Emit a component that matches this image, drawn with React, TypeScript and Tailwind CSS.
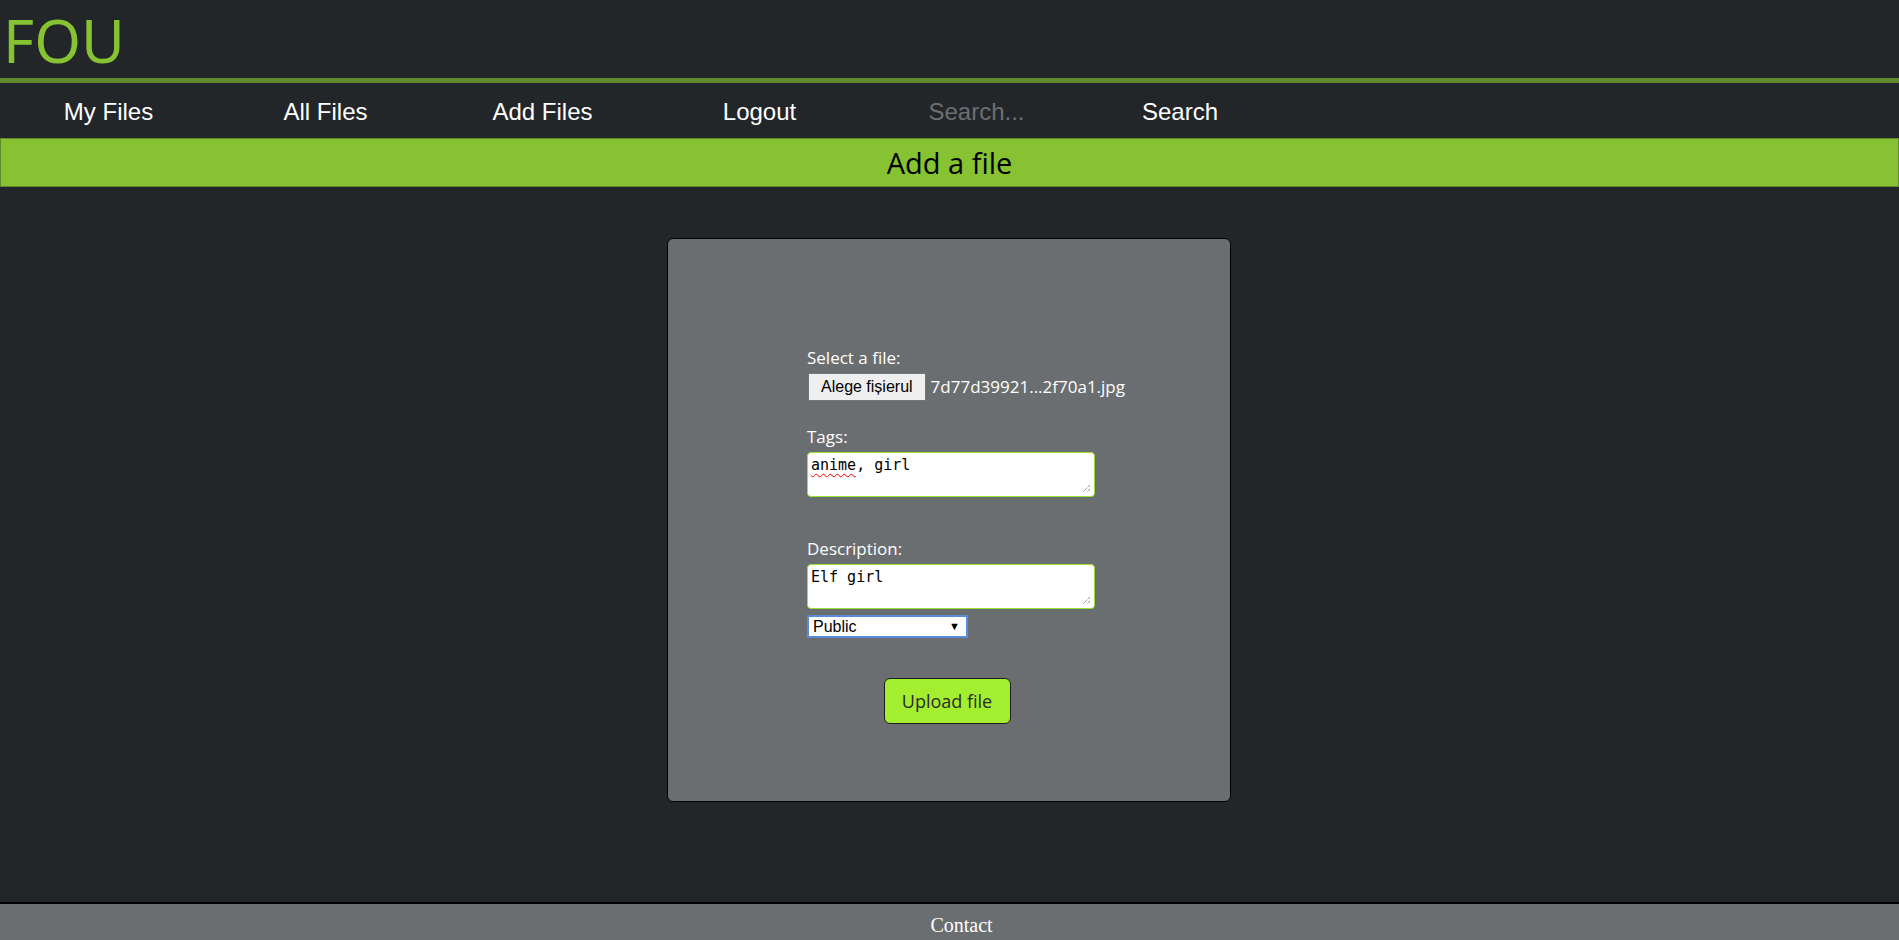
import React from "react";

const navItems = ["My Files", "All Files", "Add Files", "Logout"];

const Grip = () => (
  <svg className="absolute right-[3px] bottom-[3px]" width="10" height="10" viewBox="0 0 10 10">
    <line x1="9" y1="2" x2="2" y2="9" stroke="#555" strokeWidth="1" strokeDasharray="1 1" />
    <line x1="9" y1="6" x2="6" y2="9" stroke="#555" strokeWidth="1" strokeDasharray="1 1" />
  </svg>
);

const FakeTextarea = ({ children }: { children: React.ReactNode }) => (
  <div className="relative w-[288px] h-[45px] bg-white border border-[#9ae22e] rounded-[4px] px-[3px] pt-[3px] text-[15px] leading-[18px] text-black font-['DejaVu_Sans_Mono',monospace]">
    {children}
    <Grip />
  </div>
);

export default function App() {
  return (
    <div className="h-[940px] overflow-hidden flex flex-col bg-[#222629] font-['Open_Sans',sans-serif]">
      {/* Header */}
      <header className="h-[83px] border-b-[5px] border-[#61892f] shrink-0">
        <div className="pl-[3px] pt-[4px] text-[60px] leading-[72px] text-[#86c232] font-['Comic_Sans_MS','Noto_Sans',sans-serif]">
          FOU
        </div>
      </header>

      {/* Nav */}
      <nav className="h-[55px] flex shrink-0 font-['Liberation_Sans',Arial,sans-serif] text-[24px] leading-[55px] text-white">
        {navItems.map((item) => (
          <a key={item} className="w-[217px] text-center pt-[1px] cursor-pointer">
            {item}
          </a>
        ))}
        <input
          placeholder="Search..."
          className="w-[217px] bg-transparent text-center text-white placeholder:text-[#6c6f72] outline-none pt-[1px]"
        />
        <button className="w-[190px] text-center pt-[1px]">Search</button>
      </nav>

      {/* Page title */}
      <div className="h-[49px] shrink-0 bg-[#86c232] border border-[#61892f] text-center text-[29px] font-medium leading-[47px] text-black">
        Add a file
      </div>

      {/* Form card */}
      <main className="flex-1">
        <div className="mt-[51px] ml-[667px] w-[564px] h-[564px] bg-[#6b6e70] border border-black rounded-[6px]">
          <div className="ml-[139px] pt-[107px] text-[17px] leading-[24px] text-white">
            <div>Select a file:</div>
            <div className="mt-[3px] flex items-center whitespace-nowrap">
              <span className="ml-[1px] h-[28px] px-[12px] bg-[#efefef] border border-[#767676] text-black font-['Liberation_Sans',Arial,sans-serif] text-[16px] leading-[26px]">
                Alege fișierul
              </span>
              <span className="ml-[5px]">7d77d39921...2f70a1.jpg</span>
            </div>

            <div className="mt-[24px]">Tags:</div>
            <div className="mt-[3px]">
              <FakeTextarea>
                <span className="underline decoration-wavy decoration-[#e00] decoration-[1px] underline-offset-[3px]">anime</span>, girl
              </FakeTextarea>
            </div>

            <div className="mt-[40px]">Description:</div>
            <div className="mt-[3px]">
              <FakeTextarea>Elf girl</FakeTextarea>
            </div>

            <div className="mt-[6px] w-[161px] h-[23px] bg-white border-2 border-[#5b8bd6] flex items-center justify-between pl-[4px] pr-[6px] text-black font-['Liberation_Sans',Arial,sans-serif] text-[16px] leading-[19px]">
              <span>Public</span>
              <span className="text-[11px]">▼</span>
            </div>
          </div>

          <div className="mt-[40px] flex justify-center pr-[4px]">
            <button className="w-[127px] h-[46px] bg-[#a3ee2f] border border-[#1d1d1d] rounded-[6px] text-[18px] text-[#2b2b2b]">
              Upload file
            </button>
          </div>
        </div>
      </main>

      {/* Footer */}
      <footer className="h-[38px] shrink-0 bg-[#6b6e70] border-t-2 border-black pl-[24px] text-center pt-[10px] text-[20px] leading-[22px] text-white font-['Liberation_Serif',serif]">
        Contact
      </footer>
    </div>
  );
}
